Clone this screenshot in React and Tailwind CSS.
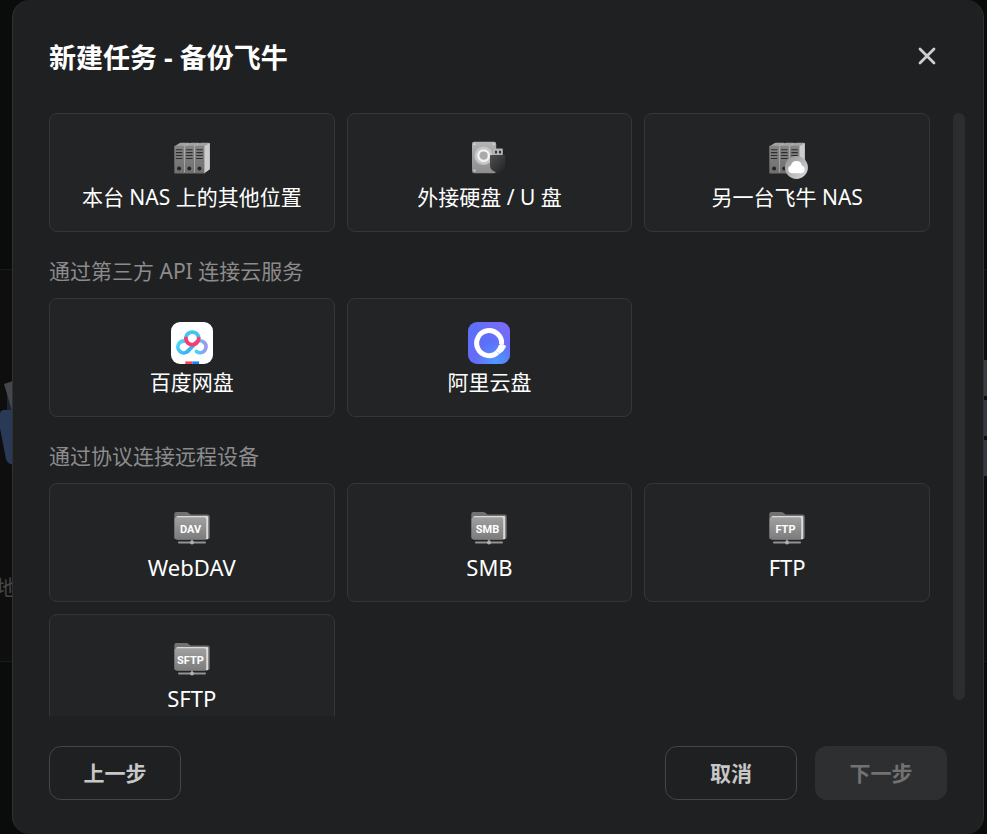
import { useState } from 'react';

const ServerIcon = ({ cloud }) => (
  <svg viewBox="0 0 42 42" className="w-[42px] h-[42px]" aria-hidden="true">
    <defs>
      <linearGradient id="cloudBadge" x1="0" y1="0" x2="1" y2="1">
        <stop offset="0" stopColor="#8f8f8f" />
        <stop offset="1" stopColor="#dcdcdc" />
      </linearGradient>
      <linearGradient id="serverFront" x1="0" y1="0" x2="0" y2="1">
        <stop offset="0" stopColor="#858585" />
        <stop offset="1" stopColor="#6f6f6f" />
      </linearGradient>
    </defs>
    {[3.3, 13.5, 23.7].map((x) => (
      <g key={x} transform={`translate(${x} 0)`}>
        <path d="M0 9.4 5 6.2Q5.6 5.8 6.4 5.8H14q1.2 0 1.2.8L9.6 10H0Z" fill="#a2a2a2" />
        <path d="M9.3 9.5 15.2 6v25.4q0 .8-.6 1.3L9.3 36.6Z" fill="#cdcdcd" />
        <rect x="0" y="8.8" width="9.7" height="27.8" rx="0.9" fill="url(#serverFront)" />
        {[12.2, 15.1, 18, 20.9].map((y) => (
          <rect key={y} x="1.6" y={y} width="6.5" height="1.1" rx="0.3" fill="#2c2c2c" />
        ))}
        <circle cx="4.8" cy="31.4" r="2" fill="#252525" />
      </g>
    ))}
    {cloud && (
      <g>
        <circle cx="30.4" cy="30.4" r="11.5" fill="url(#cloudBadge)" />
        <path
          d="M25.9 36.2a3.9 3.9 0 0 1-1-7.6 5.6 5.6 0 0 1 11-.2 4 4 0 0 1-.8 7.8Z"
          fill="#fff"
        />
      </g>
    )}
  </svg>
);

const DiskIcon = () => (
  <svg viewBox="0 0 42 42" className="w-[42px] h-[42px]" aria-hidden="true">
    <defs>
      <linearGradient id="diskBody" x1="0" y1="0" x2="0" y2="1">
        <stop offset="0" stopColor="#b5b5b5" />
        <stop offset="1" stopColor="#8d8d8d" />
      </linearGradient>
      <linearGradient id="usbBody" x1="0" y1="0" x2="1" y2="1">
        <stop offset="0" stopColor="#505050" />
        <stop offset="1" stopColor="#202020" />
      </linearGradient>
    </defs>
    <rect x="4" y="4.8" width="24.2" height="31.4" rx="2.2" fill="url(#diskBody)" />
    {[[6.6, 7.3], [25.6, 7.3], [6.6, 33.5]].map(([x, y]) => (
      <circle key={`${x}-${y}`} cx={x} cy={y} r="1" fill="#d8d8d8" />
    ))}
    <circle cx="15.6" cy="18.7" r="9.2" fill="#c6c6c6" />
    <circle cx="15.6" cy="18.7" r="5.3" fill="#aaaaaa" stroke="#f2f2f2" strokeWidth="2.4" />
    <rect x="25" y="11.5" width="9.8" height="8" rx="0.8" fill="#b4b4b4" />
    <rect x="27" y="13.8" width="2" height="2.6" fill="#303030" />
    <rect x="31" y="13.8" width="2" height="2.6" fill="#303030" />
    <path d="M22 18.8q0-.8.8-.8h13.6q.8 0 .8.8v9.4q0 3.8-3 5.6l-4.6 2.5-4.6-2.5q-3-1.8-3-5.6Z" fill="url(#usbBody)" />
  </svg>
);

const BaiduIcon = () => (
  <svg viewBox="0 0 42 42" className="w-[42px] h-[42px]" aria-hidden="true">
    <defs>
      <linearGradient id="baiduLeft" x1="0" y1="0" x2="1" y2="1">
        <stop offset="0" stopColor="#52d8fb" />
        <stop offset="1" stopColor="#38aef6" />
      </linearGradient>
      <linearGradient id="baiduRight" x1="0" y1="0" x2="1" y2="0">
        <stop offset="0" stopColor="#45d4f5" />
        <stop offset="1" stopColor="#9c98f5" />
      </linearGradient>
      <clipPath id="baiduTile">
        <rect width="42" height="42" rx="9" />
      </clipPath>
    </defs>
    <g clipPath="url(#baiduTile)">
      <rect width="42" height="42" fill="#fff" />
      <rect x="14.3" y="39.4" width="7" height="3" fill="#f8445d" />
      <rect x="21.3" y="39.4" width="6.8" height="3" fill="#1686f8" />
      <g fill="none" strokeWidth="3.8" strokeLinecap="round">
        <path d="M14.9 15.4a6.5 6.5 0 0 1 12.8 0" stroke="#45c2f8" />
        <path d="M17.2 28.8a5.9 5.9 0 1 1-.6-8.4" stroke="url(#baiduLeft)" />
        <path d="M25.3 20.2a5.9 5.9 0 1 1 .2 9.2" stroke="url(#baiduRight)" />
        <path d="M16.6 29.4 25.6 20.2" stroke="#3bb4f7" />
        <path d="M14.9 16.3a6.4 6.4 0 0 0 12.8 0" stroke="#fb3b72" />
      </g>
    </g>
  </svg>
);

const AliyunIcon = () => (
  <svg viewBox="0 0 42 42" className="w-[42px] h-[42px]" aria-hidden="true">
    <defs>
      <linearGradient id="aliyunTile" x1="1" y1="0" x2="0" y2="1">
        <stop offset="0" stopColor="#8467fa" />
        <stop offset="0.5" stopColor="#5b70fa" />
        <stop offset="1" stopColor="#6b68f6" />
      </linearGradient>
      <radialGradient id="aliyunGlow" cx="0.65" cy="0.95" r="0.5">
        <stop offset="0" stopColor="#4f9bff" />
        <stop offset="1" stopColor="#4f9bff" stopOpacity="0" />
      </radialGradient>
    </defs>
    <rect width="42" height="42" rx="9" fill="url(#aliyunTile)" />
    <rect width="42" height="42" rx="9" fill="url(#aliyunGlow)" />
    <path d="M33.6 22.2A12.5 12.5 0 1 0 29.5 30.4" fill="none" stroke="#fff" strokeWidth="5" />
    <path d="M30.6 23.6 33 21.4l4.4 2.2a1 1 0 0 1 .4 1.3q-2 4.8-6.3 7.1l-4-3.4q2.4-2.1 3.1-5Z" fill="#fff" />
  </svg>
);

const FolderIcon = ({ text }) => (
  <svg viewBox="0 0 42 42" className="w-[42px] h-[42px]" aria-hidden="true">
    <defs>
      <linearGradient id="folderFront" x1="0" y1="0" x2="0" y2="1">
        <stop offset="0" stopColor="#a0a0a0" />
        <stop offset="1" stopColor="#7c7c7c" />
      </linearGradient>
    </defs>
    <path d="M3.3 7Q3.3 5 5.3 5h9.9q1.2 0 2.2.8l1.5 1.2q.8.5 1.7.5h16q2.1 0 2.1 2v20.8q0 2-2 2H5.3q-2 0-2-2Z" fill="#727272" />
    <rect x="5.4" y="8.9" width="31.8" height="23.3" rx="1.2" fill="#dadada" />
    <rect x="3.6" y="10.3" width="31.6" height="22.2" rx="1.8" fill="url(#folderFront)" />
    <rect x="7" y="34.6" width="28" height="1.9" rx="0.9" fill="#929292" />
    <path d="M20.2 32.5h1.6v2h-1.6Z" fill="#929292" />
    <circle cx="21" cy="35.4" r="2" fill="#b0b0b0" />
    <text
      x="19.5"
      y="26"
      textAnchor="middle"
      fill="#fff"
      className="font-['Roboto',sans-serif] text-[11px] font-bold"
    >
      {text}
    </text>
  </svg>
);

const groups = [
  {
    title: '',
    labelSize: 'text-[21px]',
    items: [
      { name: '本台 NAS 上的其他位置', icon: <ServerIcon /> },
      { name: '外接硬盘 / U 盘', icon: <DiskIcon /> },
      { name: '另一台飞牛 NAS', icon: <ServerIcon cloud /> }
    ]
  },
  {
    title: '通过第三方 API 连接云服务',
    labelSize: 'text-[21px]',
    items: [
      { name: '百度网盘', icon: <BaiduIcon /> },
      { name: '阿里云盘', icon: <AliyunIcon /> }
    ]
  },
  {
    title: '通过协议连接远程设备',
    labelSize: 'text-[22px]',
    items: [
      { name: 'WebDAV', icon: <FolderIcon text="DAV" /> },
      { name: 'SMB', icon: <FolderIcon text="SMB" /> },
      { name: 'FTP', icon: <FolderIcon text="FTP" /> },
      { name: 'SFTP', icon: <FolderIcon text="SFTP" /> }
    ]
  }
];

const TargetCard = ({ item, labelSize, selected, onSelect }) => (
  <button
    type="button"
    aria-pressed={selected}
    onClick={() => onSelect(item.name)}
    className={`h-[119px] pt-[23px] flex flex-col items-center gap-1 rounded-lg border bg-[#232426] hover:bg-[#292a2c] ${
      selected ? 'border-[#3d7bff]' : 'border-[#353638]'
    }`}
  >
    {item.icon}
    <span className={`${labelSize} leading-[28px] text-white whitespace-nowrap`}>{item.name}</span>
  </button>
);

// Dimmed page that stays visible around the dialog
const Backdrop = () => (
  <div className="absolute inset-0 flex flex-col bg-[#0a0c0b]" aria-hidden="true">
    <div className="h-[269px]" />
    <div className="h-[393px] flex justify-between border-y border-[#1a1a1a] bg-[#0e0e0e]">
      <div className="pt-[110px]">
        <svg viewBox="0 0 16 88" className="w-4 h-[88px]">
          <path d="M7 12h9v40H7Z" fill="#1b2536" />
          <path d="M4 4 16 0v30l-4 1Z" fill="#43464a" />
          <path d="M0 33q1-3 4-3h12v54q-8 2-10-5L0 48Z" fill="#2a3a56" />
        </svg>
        <div className="mt-[106px] -ml-1 text-[21px] leading-[26px] text-[#454545]">地</div>
      </div>
      <div className="w-1 pt-[90px] flex flex-col gap-1">
        <div className="h-9 bg-[#393c43]" />
        <div className="h-9 bg-[#343841]" />
        <div className="h-9 bg-[#343841]" />
      </div>
    </div>
  </div>
);

const App = () => {
  const [target, setTarget] = useState('');

  return (
    <div className="relative h-screen overflow-hidden font-['Noto_Sans','Noto_Sans_CJK_SC',sans-serif]">
      <Backdrop />
      <div
        role="dialog"
        aria-labelledby="dialog-title"
        className="relative h-full ml-3 mr-[3px] flex flex-col rounded-[18px] border-x border-[#303133] bg-[#1f2022]"
      >
        <header className="h-[113px] shrink-0 px-9 pb-0.5 flex items-center justify-between">
          <h1 id="dialog-title" className="pt-1.5 text-[27px] font-bold text-white">新建任务 - 备份飞牛</h1>
          <button type="button" aria-label="关闭" className="p-2 text-[#cfcfcf] hover:text-white">
            <svg viewBox="0 0 24 24" className="w-6 h-6" fill="none" stroke="currentColor" strokeWidth="2.8" strokeLinecap="round">
              <path d="M5 5 19 19M19 5 5 19" />
            </svg>
          </button>
        </header>

        <div className="flex-1 min-h-0 pl-9 pr-[18px] flex gap-[23px]">
          <div className="flex-1 min-w-0 overflow-y-auto [scrollbar-width:none]">
            {groups.map((group) => (
              <section key={group.title}>
                {group.title && (
                  <h2 className="h-[66px] pt-3.5 flex items-center text-[21px] text-[#8c8c8d]">{group.title}</h2>
                )}
                <div className="grid grid-cols-3 gap-3">
                  {group.items.map((item) => (
                    <TargetCard
                      key={item.name}
                      item={item}
                      labelSize={group.labelSize}
                      selected={target === item.name}
                      onSelect={setTarget}
                    />
                  ))}
                </div>
              </section>
            ))}
          </div>
          <div className="w-3 mb-4 rounded-full bg-[#2c2d2f]" />
        </div>

        <footer className="shrink-0 px-9 pt-[30px] pb-[34px] flex gap-[18px] text-[21px] font-bold">
          <button type="button" className="w-[132px] h-[54px] pt-0.5 mr-auto rounded-xl border border-[#444547] text-[#c7c7c8]">
            上一步
          </button>
          <button type="button" className="w-[132px] h-[54px] pt-0.5 rounded-xl border border-[#444547] text-[#c7c7c8]">
            取消
          </button>
          <button type="button" disabled={!target} className="w-[132px] h-[54px] pt-0.5 rounded-xl bg-[#2e2f31] text-[#c7c7c8] disabled:text-[#717273]">
            下一步
          </button>
        </footer>
      </div>
    </div>
  );
};

export default App;
